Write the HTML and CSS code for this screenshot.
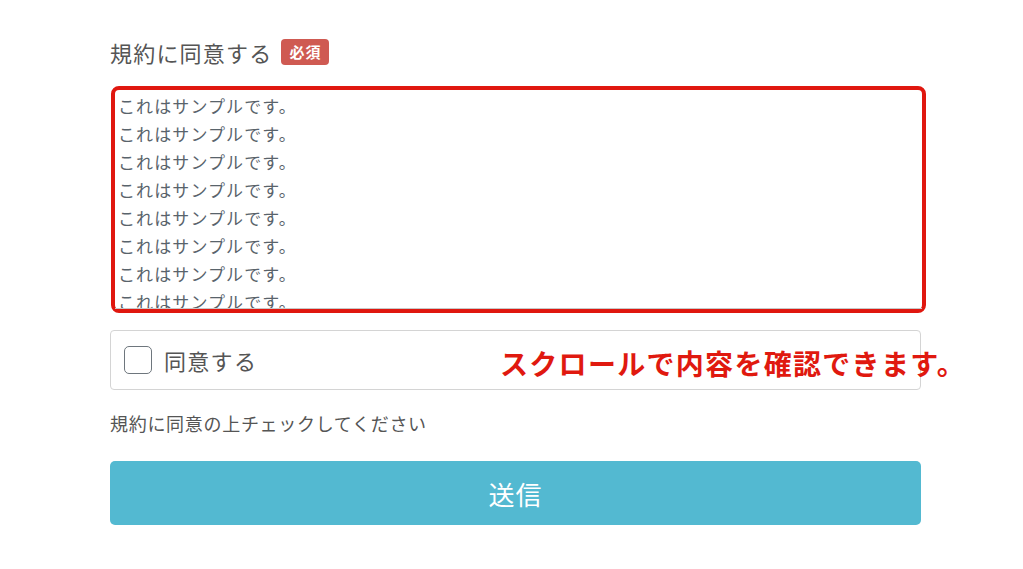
FILE: index.html
```html
<!DOCTYPE html>
<html lang="ja">
<head>
  <meta charset="UTF-8">
  <title>規約に同意する</title>
  <link rel="stylesheet" href="styles.css">
</head>
<body>
  <form class="agree-form">
    <div class="field-label">
      規約に同意する <span class="badge">必須</span>
    </div>

    <!-- Terms box with red highlight -->
    <div class="terms-frame">
      <div class="terms-box">
        <p>これはサンプルです。</p>
        <p>これはサンプルです。</p>
        <p>これはサンプルです。</p>
        <p>これはサンプルです。</p>
        <p>これはサンプルです。</p>
        <p>これはサンプルです。</p>
        <p>これはサンプルです。</p>
        <p>これはサンプルです。</p>
        <p>これはサンプルです。</p>
        <p>これはサンプルです。</p>
      </div>
    </div>

    <div class="check-row">
      <label class="check-label">
        <span class="check-box"></span>
        同意する
      </label>
      <span class="note">スクロールで内容を確認できます。</span>
    </div>

    <p class="help">規約に同意の上チェックしてください</p>

    <button type="submit" class="submit">送信</button>
  </form>
</body>
</html>
```

FILE: styles.css
```css
body {
  margin: 0;
  background: #fff;
  font-family: "Noto Sans CJK JP", "Noto Sans", sans-serif;
  color: #555;
}

.agree-form {
  width: 811px;
  margin-left: 110px;
  padding-top: 35px;
}

.field-label {
  display: flex;
  align-items: center;
  gap: 9px;
  font-size: 22px;
  line-height: 34px;
  letter-spacing: 1.2px;
  color: #555;
}

.badge {
  display: inline-block;
  height: 26px;
  line-height: 26px;
  padding: 0 8px;
  border-radius: 4px;
  background: #cf5a52;
  color: #fff;
  font-size: 15px;
  font-weight: bold;
  letter-spacing: 1px;
}

.terms-frame {
  margin-top: 17px;
  margin-left: 1px;
  width: 807px;
  border: 4px solid #e0170f;
  border-radius: 8px;
}

.terms-box {
  height: 216px;
  overflow: hidden;
  padding: 2px 0 0 3px;
  border-bottom: 1px solid #c8c8c8;
  color: #59636b;
  font-size: 17px;
  line-height: 28px;
  letter-spacing: 1.1px;
}

.terms-box p {
  margin: 0;
}

.check-row {
  position: relative;
  margin-top: 17px;
  height: 58px;
  border: 1px solid #d4d4d4;
  border-radius: 4px;
  display: flex;
  align-items: center;
}

.check-label {
  display: flex;
  align-items: center;
  gap: 12px;
  padding-left: 13px;
  font-size: 22px;
  letter-spacing: 1.3px;
  color: #555;
}

.check-box {
  width: 26px;
  height: 26px;
  border: 1.5px solid #6e767d;
  border-radius: 5px;
}

/* annotation over the row */
.note {
  position: absolute;
  left: 389px;
  top: 12px;
  white-space: nowrap;
  color: #e0190f;
  font-size: 28px;
  font-weight: bold;
  letter-spacing: 1.3px;
}

.help {
  margin: 20px 0 0;
  font-size: 18px;
  line-height: 26px;
  letter-spacing: 0.7px;
  color: #555;
}

.submit {
  display: block;
  width: 100%;
  height: 64px;
  margin-top: 25px;
  border: none;
  border-radius: 5px;
  background: #53b9d1;
  color: #fff;
  font-family: inherit;
  font-size: 26px;
  letter-spacing: 1px;
}
```
